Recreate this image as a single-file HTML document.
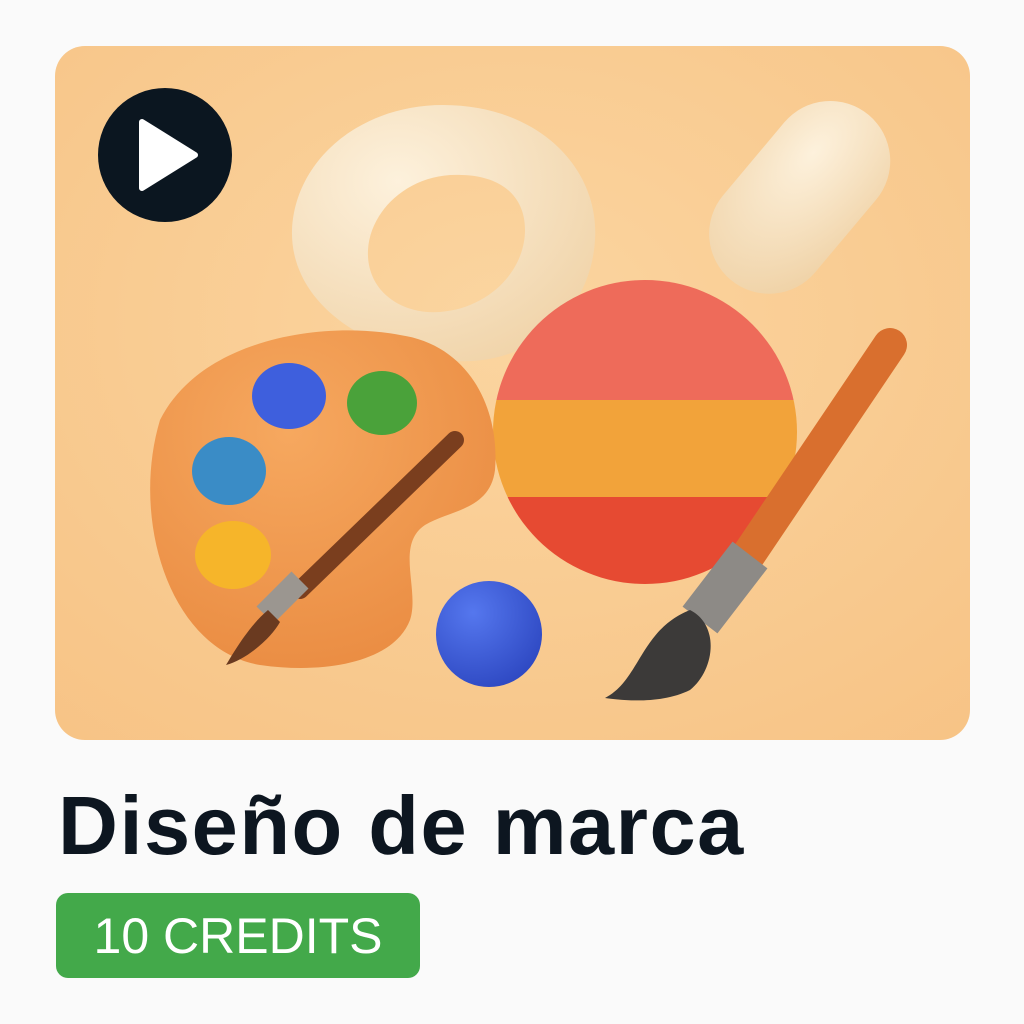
<!DOCTYPE html>
<html><head><meta charset="utf-8"><style>
body{margin:0;width:1024px;height:1024px;background:#fafafa;font-family:"Liberation Sans",sans-serif;overflow:hidden;position:relative}
.card{position:absolute;left:55px;top:46px;width:915px;height:694px;border-radius:30px;overflow:hidden}
h1{position:absolute;left:58px;top:778px;margin:0;font-size:83px;font-weight:bold;color:#0d1620;letter-spacing:1.5px;line-height:96px}
.badge{position:absolute;left:56px;top:893px;width:364px;height:85px;border-radius:12px;background:#43a94a;color:#fff;font-size:50px;line-height:87px;text-align:center}
</style></head><body>
<div class="card">
<svg width="915" height="694" viewBox="55 46 915 694">
<defs>
<radialGradient id="bg" cx="0.5" cy="0.4" r="0.8"><stop offset="0" stop-color="#fbd5a0"/><stop offset="1" stop-color="#f7c385"/></radialGradient>
<radialGradient id="cream" cx="0.35" cy="0.3" r="0.8"><stop offset="0" stop-color="#fdf1dc"/><stop offset="1" stop-color="#f0d3a8"/></radialGradient>
<radialGradient id="pal" cx="0.4" cy="0.3" r="0.8"><stop offset="0" stop-color="#f6a85f"/><stop offset="1" stop-color="#e98a40"/></radialGradient>
<radialGradient id="blue" cx="0.35" cy="0.3" r="0.8"><stop offset="0" stop-color="#5577ee"/><stop offset="1" stop-color="#2c46c0"/></radialGradient>
<clipPath id="ball"><circle cx="645" cy="432" r="152"/></clipPath>
</defs>
<rect x="55" y="46" width="915" height="694" fill="url(#bg)"/>
<path d="M443 105 C540 105 600 170 595 240 C590 320 520 370 445 360 C360 350 290 300 292 230 C295 160 360 105 443 105Z M462 175 C410 172 370 210 368 250 C366 290 400 315 440 312 C490 308 525 270 525 230 C525 195 500 176 462 175Z" fill="url(#cream)" fill-rule="evenodd"/>
<rect x="740" y="90" width="120" height="215" rx="60" transform="rotate(40 800 197)" fill="url(#cream)"/>
<g clip-path="url(#ball)">
<rect x="490" y="275" width="310" height="125" fill="#ee6b5a"/>
<rect x="490" y="400" width="310" height="97" fill="#f2a33a"/>
<rect x="490" y="497" width="310" height="95" fill="#e64a32"/>
</g>
<path d="M160 420 C200 340 320 320 400 335 C470 345 500 410 495 470 C490 510 450 510 425 525 C395 545 420 590 410 620 C395 660 330 675 260 665 C170 650 130 520 160 420Z" fill="url(#pal)"/>
<ellipse cx="289" cy="396" rx="37" ry="33" fill="#3e5fdd"/>
<ellipse cx="382" cy="403" rx="35" ry="32" fill="#4aa23a"/>
<ellipse cx="229" cy="471" rx="37" ry="34" fill="#3a8cc6"/>
<ellipse cx="233" cy="555" rx="38" ry="34" fill="#f6b52a"/>
<path d="M455 440 L300 590" stroke="#7a3e1e" stroke-width="18" stroke-linecap="round" fill="none"/>
<path d="M300 580 L265 615" stroke="#9b9690" stroke-width="24"/>
<path d="M268 610 C250 625 235 650 226 665 C245 660 270 640 280 622Z" fill="#6a3a20"/>
<circle cx="489" cy="634" r="53" fill="url(#blue)"/>
<path d="M890 345 L745 560" stroke="#d96f2e" stroke-width="34" stroke-linecap="round"/>
<path d="M750 555 L700 620" stroke="#8d8a86" stroke-width="44"/>
<path d="M690 610 C720 625 715 670 690 690 C660 705 620 700 605 698 C640 680 640 630 690 610Z" fill="#3c3a39"/>
<circle cx="165" cy="155" r="67" fill="#0b1620"/>
<path d="M142 122 L195 155 L142 188 Z" fill="#fff" stroke="#fff" stroke-width="6" stroke-linejoin="round"/>
</svg>
</div>
<h1>Diseño de marca</h1>
<div class="badge">10 CREDITS</div>
</body></html>
